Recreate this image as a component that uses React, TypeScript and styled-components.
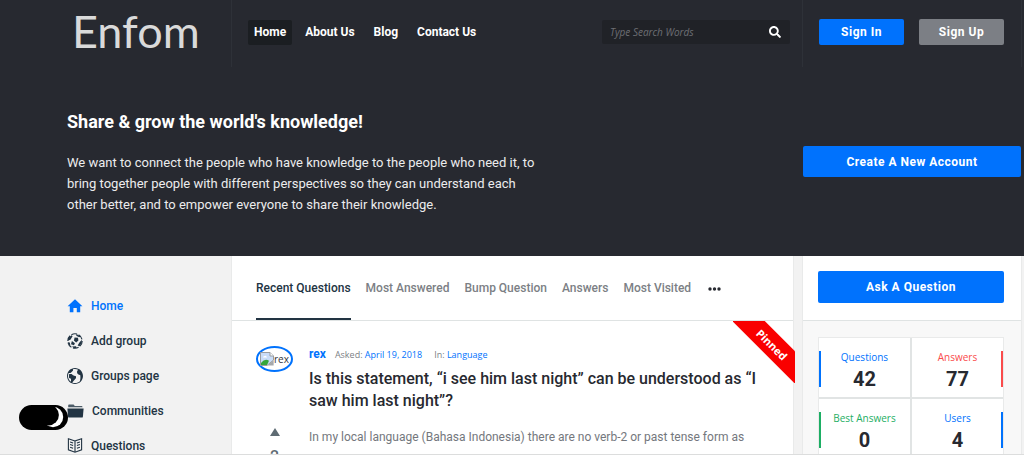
import React from 'react';
import styled, { createGlobalStyle } from 'styled-components';
import { FaSearch } from 'react-icons/fa';
import { ImEarth } from 'react-icons/im';

const BLUE = '#0072fd';
const INK = '#223443';
const DARK = '#272930';
const COLUMNS = '231px minmax(0, 1fr) 222px';

const GlobalStyle = createGlobalStyle`
  *, *::before, *::after { box-sizing: border-box; }
  body { margin: 0; background: #f2f2f2; font-family: Roboto, sans-serif; color: ${DARK}; }
  a { text-decoration: none; color: inherit; }
  button, input { font-family: inherit; }
  h1, h2, p, ul, dl, dd { margin: 0; padding: 0; }
`;

const Page = styled.div`
  height: 100vh;
  overflow: hidden;
  border-bottom: 1px solid #dcdddd;
`;

const Header = styled.header`
  display: grid;
  grid-template-columns: ${COLUMNS};
  height: 67px;
  background: ${DARK};
`;

const LogoCell = styled.div`
  padding-left: 72px;
`;

const Logo = styled.a`
  font: 400 45px/62px Lato, sans-serif;
  color: #dadada;
`;

const HeaderMain = styled.div`
  display: flex;
  justify-content: space-between;
  align-items: flex-start;
  padding: 20px 12px 0 16px;
  border-left: 1px solid #2e3138;
`;

const Nav = styled.nav`
  display: flex;
  gap: 7px;
`;

const NavLink = styled.a<{ $active?: boolean }>`
  padding: 0 6px;
  border-radius: 2px;
  font-size: 12px;
  font-weight: 700;
  line-height: 25px;
  color: #fff;
  background: ${(p) => (p.$active ? '#1b1e22' : 'transparent')};
`;

const Search = styled.form`
  display: flex;
  align-items: center;
  width: 188px;
  height: 24px;
  padding: 0 9px 0 8px;
  border-radius: 2px;
  background: #202227;
`;

const SearchInput = styled.input`
  flex: 1;
  min-width: 0;
  padding: 0;
  border: 0;
  outline: 0;
  background: none;
  color: #ddd;
  font: italic 10px/24px 'Open Sans', sans-serif;
  &::placeholder { color: #6d6f74; opacity: 1; }
`;

const SearchButton = styled.button`
  display: flex;
  padding: 0;
  border: 0;
  background: none;
  color: #fff;
`;

const HeaderSide = styled.div`
  display: flex;
  gap: 15px;
  padding: 19px 17px 0 16px;
  margin-right: 2px;
  border: solid #2e3138;
  border-width: 0 1px;
`;

const Button = styled.button<{ $tone?: string; $height: number }>`
  flex: 1;
  width: 100%;
  height: ${(p) => p.$height}px;
  padding: 0;
  border: 0;
  border-radius: 2px;
  background: ${(p) => p.$tone ?? BLUE};
  color: #fff;
  font-size: 12px;
  font-weight: 700;
  letter-spacing: 0.5px;
`;

const Hero = styled.section`
  display: grid;
  grid-template-columns: minmax(0, 1fr) 218px;
  align-items: start;
  padding: 44px 3px 41px 67px;
  background: ${DARK};
`;

const HeroTitle = styled.h1`
  font-size: 18px;
  line-height: 22px;
  color: #fff;
`;

const HeroText = styled.p`
  max-width: 480px;
  margin-top: 19px;
  font-size: 13px;
  line-height: 21px;
  color: #ececed;
`;

const HeroAction = styled.div`
  display: flex;
  padding-top: 35px;
`;

const Body = styled.div`
  display: grid;
  grid-template-columns: ${COLUMNS};
`;

const SideNav = styled.nav`
  display: flex;
  flex-direction: column;
  padding: 32px 0 0 67px;
`;

const SideLink = styled.a<{ $active?: boolean }>`
  display: flex;
  align-items: center;
  gap: 8px;
  height: 35px;
  font-size: 12px;
  font-weight: 500;
  color: ${(p) => (p.$active ? BLUE : INK)};
`;

const Feed = styled.main`
  margin-right: 8px;
  border: solid #e9eaea;
  border-width: 0 1px;
  background: #fff;
`;

const Tabs = styled.nav`
  display: flex;
  gap: 15px;
  height: 65px;
  padding-left: 24px;
  border-bottom: 1px solid #dfe3e3;
`;

const Tab = styled.a<{ $active?: boolean }>`
  height: 64px;
  font-size: 12px;
  font-weight: 500;
  line-height: 64px;
  color: ${(p) => (p.$active ? INK : '#7c7f85')};
  border-bottom: ${(p) => (p.$active ? `2px solid ${INK}` : '0')};
`;

const MoreButton = styled.button`
  display: flex;
  align-items: center;
  padding: 2px 0 0 2px;
  border: 0;
  background: none;
  color: ${DARK};
`;

const Post = styled.article`
  position: relative;
  display: grid;
  grid-template-columns: 53px minmax(0, 1fr);
  padding: 25px 32px 30px 24px;
`;

const PostAside = styled.div`
  display: flex;
  flex-direction: column;
  align-items: flex-start;
`;

const Avatar = styled.a`
  display: flex;
  align-items: center;
  justify-content: center;
  width: 37px;
  height: 26px;
  border: 2px solid ${BLUE};
  border-radius: 50%;
  font: 10px/14px 'Open Sans', sans-serif;
  color: #33363c;
`;

const Vote = styled.div`
  display: flex;
  flex-direction: column;
  align-items: center;
  gap: 12px;
  width: 37px;
  padding-top: 56px;
  font-size: 16px;
  font-weight: 500;
  line-height: 18px;
  color: #5e6b73;
`;

const VoteButton = styled.button`
  display: flex;
  padding: 0;
  border: 0;
  background: none;
  color: inherit;
`;

const Meta = styled.div`
  display: flex;
  align-items: baseline;
  gap: 9px;
  line-height: 17px;
  font-family: 'Open Sans', sans-serif;
  font-size: 9px;
  color: #7c7f85;
  a { color: ${BLUE}; }
  span + span { margin-left: 3px; }
`;

const Author = styled.a`
  font: 700 12px/17px Roboto, sans-serif;
`;

const PostTitle = styled.h2`
  margin-top: 5px;
  font-size: 16px;
  font-weight: 500;
  line-height: 22px;
`;

const Excerpt = styled.p`
  margin-top: 14px;
  font-size: 12px;
  line-height: 22px;
  color: #74777d;
`;

const RibbonCorner = styled.div`
  position: absolute;
  top: 0;
  right: -2px;
  width: 62px;
  height: 62px;
  overflow: hidden;
`;

const Ribbon = styled.span`
  position: absolute;
  top: 12px;
  left: -12px;
  width: 102px;
  background: #f90000;
  color: #fff;
  font: 700 11px/23px 'Open Sans', sans-serif;
  text-align: center;
  transform: rotate(45deg);
`;

const Side = styled.aside`
  margin-right: 2px;
  border: solid #e9eaea;
  border-width: 0 1px;
  background: #f8f8f8;
`;

const Ask = styled.div`
  display: flex;
  height: 65px;
  padding: 15px 17px 0 15px;
  border-bottom: 1px solid #dfe3e3;
  background: #fff;
`;

const Stats = styled.dl`
  display: grid;
  grid-template-columns: 1fr 1fr;
  gap: 2px;
  margin: 16px 17px 16px 15px;
  border: 1px solid #e9eaea;
  background: #e1e4e4;
`;

const Stat = styled.div<{ $color: string; $side: 'left' | 'right' }>`
  position: relative;
  display: flex;
  flex-direction: column;
  align-items: center;
  height: 59px;
  padding-top: 11px;
  background: #fff;
  &::before {
    content: '';
    position: absolute;
    top: 13px;
    bottom: 10px;
    ${(p) => p.$side}: 0;
    width: 2px;
    background: ${(p) => p.$color};
  }
  dt { font: 10px/16px 'Open Sans', sans-serif; color: ${(p) => p.$color}; }
  dd { font-size: 20px; font-weight: 700; line-height: 28px; }
`;

const ThemeToggle = styled.button`
  position: fixed;
  left: 19px;
  bottom: 25px;
  display: flex;
  padding: 0;
  border: 0;
  border-radius: 13px;
  background: #000;
`;

const HomeIcon = () => (
  <svg width="16" height="14" viewBox="0 0 16 14" fill="currentColor" aria-hidden="true">
    <path d="M8 .3 15.4 7.3H13.2V13.3H9.8V8.9H6.4V13.3H2.8V7.3H.6Z" />
  </svg>
);

const BallIcon = () => (
  <svg width="16" height="16" viewBox="0 0 16 16" fill="none" stroke="currentColor" aria-hidden="true">
    <circle cx="8" cy="8" r="7.2" strokeWidth="1.1" strokeDasharray="5.8 1.7" />
    <path
      d="M7.6 4.6 11 4.8 11.4 7.6 9.2 9.4 6.9 7.4Z M4.9 8.1 7.9 10.3 7 12.2 4 11.2Z M1.2 5 4.6 2.2 5.6 3.2 3.4 6.8 1 7.4Z M9.4 1 13.8 3.4 12.2 4.2 9.3 2.8Z M12.6 9.2 14.9 6.8 14.7 10 12.6 13.2 10.6 12.6Z M5 13.4 9 13.2 9.7 15 6.6 15Z M1 9.2 2.8 9.6 3.4 12.6 2.2 12Z"
      fill="currentColor"
      stroke="none"
    />
  </svg>
);

const FolderIcon = () => (
  <svg width="17" height="14" viewBox="0 0 17 14" fill="currentColor" aria-hidden="true">
    <path d="M2 .6h4.6l1.2 1.3h6.8q.9 0 .9 1v.4H1.2V1.4q0-.8.8-.8Z" opacity=".8" />
    <path d="M.4 4.4h16.2l-.7 8.3q-.1.9-1 .9H2.1q-.9 0-1-.9Z" />
  </svg>
);

const BookIcon = () => (
  <svg width="16" height="15" viewBox="0 0 16 15" fill="none" stroke="currentColor" strokeWidth="1.1" aria-hidden="true">
    <path d="M8 3 1.4.8v11L8 14.2l6.6-2.4V.8L8 3v11.2" />
    <path d="m3.1 4 3 1m-3 1.6 3 1m-3 1.6 3 1M12.9 4l-3 1m3 1.6-3 1m3 1.6-3 1" />
  </svg>
);

const BrokenImage = () => (
  <svg width="14" height="14" viewBox="0 0 14 14" aria-hidden="true">
    <path d="M.5.5H10l3.5 3.5v4L7 13.5H.5Z" fill="#c8dcf8" stroke="#9a9da0" />
    <path d="M10 .5V4h3.5" fill="#fff" stroke="#9a9da0" />
    <path d="M3 5.5q0-1.6 1.6-1.6 1.8-.6 2.4 1.6Z" fill="#fff" />
    <path d="M1 13V11q4-5 8-2.2L7 13Z" fill="#35a63a" />
    <path d="m7.6 13.5 6-5.4v5.4Z" fill="#a5a8ab" />
  </svg>
);

const tabs = ['Recent Questions', 'Most Answered', 'Bump Question', 'Answers', 'Most Visited'];
const nav = ['Home', 'About Us', 'Blog', 'Contact Us'];

const sideLinks = [
  { label: 'Home', icon: <HomeIcon /> },
  { label: 'Add group', icon: <BallIcon /> },
  { label: 'Groups page', icon: <ImEarth size={16} /> },
  { label: 'Communities', icon: <FolderIcon /> },
  { label: 'Questions', icon: <BookIcon /> },
];

const stats = [
  { label: 'Questions', value: 42, color: BLUE },
  { label: 'Answers', value: 77, color: '#fa4b4b' },
  { label: 'Best Answers', value: 0, color: '#1dae64' },
  { label: 'Users', value: 4, color: BLUE },
];

export default function App() {
  return (
    <Page>
      <GlobalStyle />
      <Header>
        <LogoCell><Logo href="#">Enfom</Logo></LogoCell>
        <HeaderMain>
          <Nav>
            {nav.map((label, i) => <NavLink key={label} href="#" $active={i === 0}>{label}</NavLink>)}
          </Nav>
          <Search>
            <SearchInput type="search" aria-label="Search" placeholder="Type Search Words" />
            <SearchButton type="button" aria-label="Search"><FaSearch size={12} /></SearchButton>
          </Search>
        </HeaderMain>
        <HeaderSide>
          <Button $height={26}>Sign In</Button>
          <Button $height={26} $tone="#7c7f85">Sign Up</Button>
        </HeaderSide>
      </Header>
      <Hero>
        <div>
          <HeroTitle>Share &amp; grow the world's knowledge!</HeroTitle>
          <HeroText>
            We want to connect the people who have knowledge to the people who need it, to bring together
            people with different perspectives so they can understand each other better, and to empower
            everyone to share their knowledge.
          </HeroText>
        </div>
        <HeroAction><Button $height={31}>Create A New Account</Button></HeroAction>
      </Hero>
      <Body>
        <SideNav>
          {sideLinks.map((l, i) => (
            <SideLink key={l.label} href="#" $active={i === 0}>{l.icon}{l.label}</SideLink>
          ))}
        </SideNav>
        <Feed>
          <Tabs>
            {tabs.map((label, i) => <Tab key={label} href="#" $active={i === 0}>{label}</Tab>)}
            <MoreButton aria-label="More">
              <svg width="13" height="4" viewBox="0 0 13 4" fill="currentColor">
                <circle cx="2" cy="2" r="1.7" /><circle cx="6.5" cy="2" r="1.7" /><circle cx="11" cy="2" r="1.7" />
              </svg>
            </MoreButton>
          </Tabs>
          <Post>
            <PostAside>
              <Avatar href="#"><BrokenImage />rex</Avatar>
              <Vote>
                <VoteButton aria-label="Vote up">
                  <svg width="10" height="8" viewBox="0 0 10 8" fill="currentColor"><path d="M5 0 10 8H0Z" /></svg>
                </VoteButton>
                <span>2</span>
              </Vote>
            </PostAside>
            <div>
              <Meta>
                <Author href="#">rex</Author>
                <span>Asked: <a href="#">April 19, 2018</a></span>
                <span>In: <a href="#">Language</a></span>
              </Meta>
              <PostTitle>Is this statement, “i see him last night” can be understood as “I saw him last night”?</PostTitle>
              <Excerpt>In my local language (Bahasa Indonesia) there are no verb-2 or past tense form as</Excerpt>
            </div>
            <RibbonCorner><Ribbon>Pinned</Ribbon></RibbonCorner>
          </Post>
        </Feed>
        <Side>
          <Ask><Button $height={32}>Ask A Question</Button></Ask>
          <Stats>
            {stats.map((s, i) => (
              <Stat key={s.label} $color={s.color} $side={i % 2 ? 'right' : 'left'}>
                <dt>{s.label}</dt>
                <dd>{s.value}</dd>
              </Stat>
            ))}
          </Stats>
        </Side>
      </Body>
      <ThemeToggle aria-label="Toggle dark mode">
        <svg width="49" height="25" viewBox="0 0 49 25">
          <circle cx="34" cy="12" r="10.2" fill="#fff" />
          <circle cx="29.5" cy="10" r="10.4" fill="#000" />
        </svg>
      </ThemeToggle>
    </Page>
  );
}
